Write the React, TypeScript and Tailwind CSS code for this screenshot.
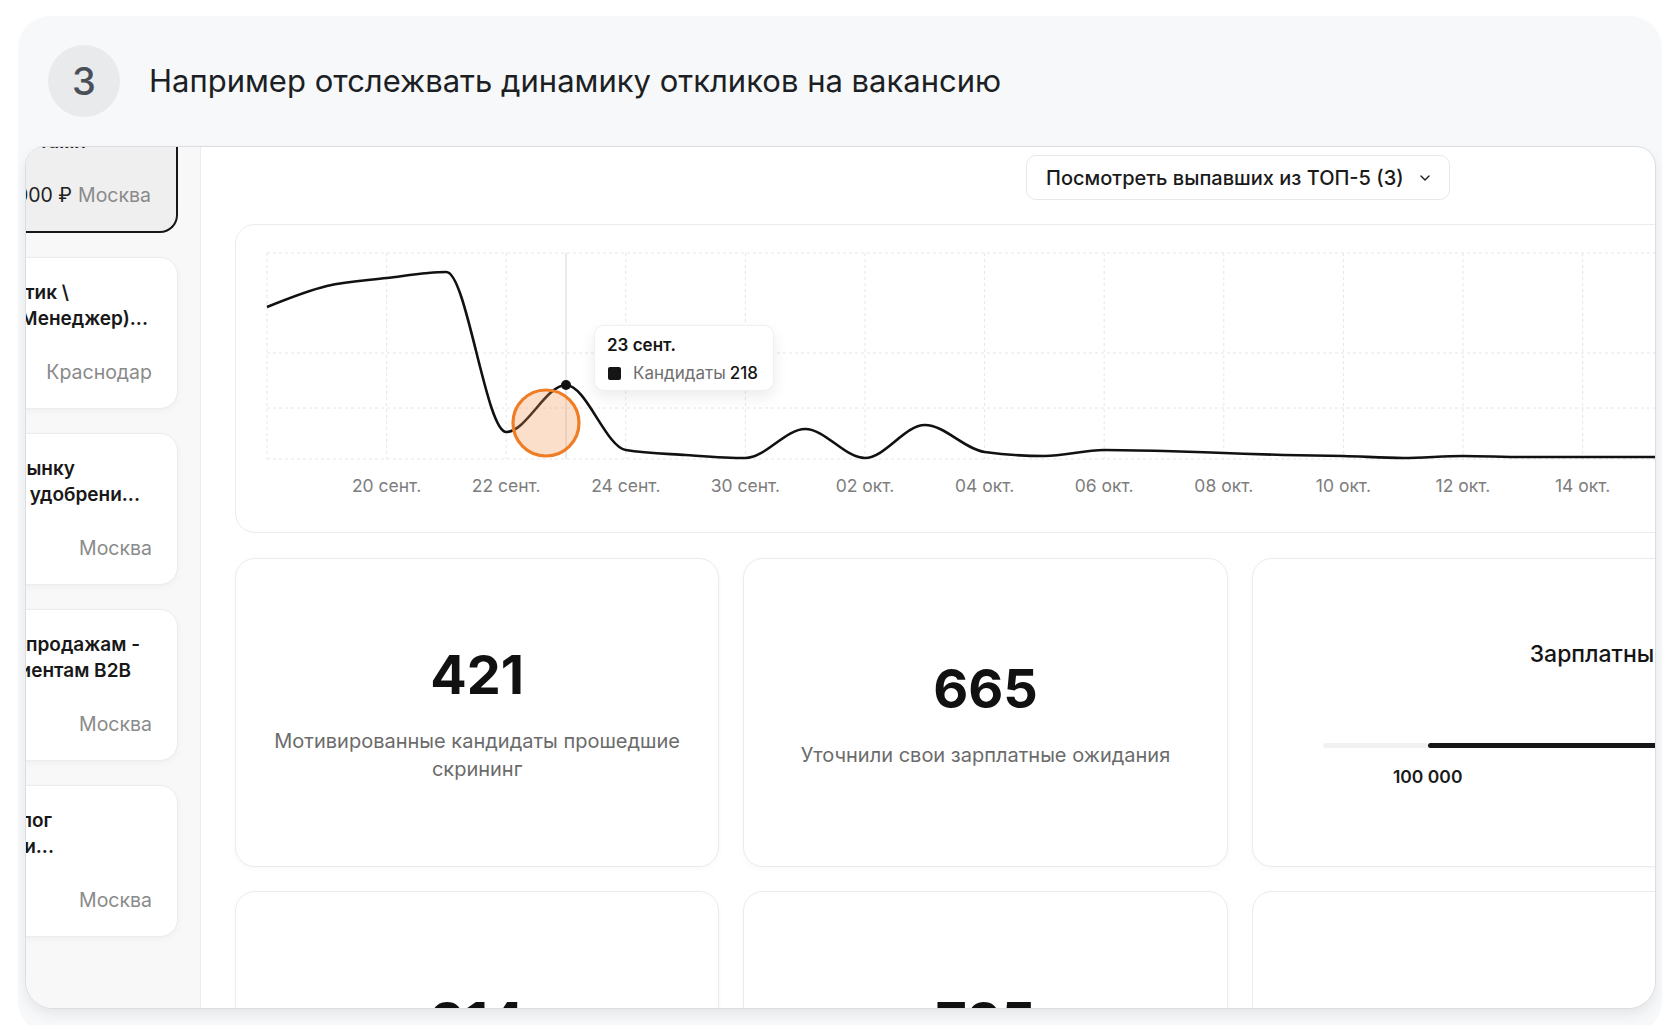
import { ChevronDown } from "lucide-react";

// chart geometry, in px inside the chart card
const STEP = 59.8;
const X0 = 31;
const VALUES = [
  82, 61, 53, 47, 207, 160, 225, 230, 233, 204, 233, 200, 227, 231, 225, 226,
  228, 230, 231, 233, 231, 232, 232, 232, 232, 232,
];
const LABELS: Record<number, string> = {
  2: "20 сент.",
  4: "22 сент.",
  6: "24 сент.",
  8: "30 сент.",
  10: "02 окт.",
  12: "04 окт.",
  14: "06 окт.",
  16: "08 окт.",
  18: "10 окт.",
  20: "12 окт.",
  22: "14 окт.",
  24: "16 окт.",
};
const GRID_Y = [28, 128, 183, 234];

// d3 curveMonotoneX, rewritten by hand
function monotonePath(pts: [number, number][]) {
  const n = pts.length;
  const sign = (v: number) => (v < 0 ? -1 : 1);
  const t: number[] = new Array(n).fill(0);
  for (let i = 1; i < n - 1; i++) {
    const [x0, y0] = pts[i - 1];
    const [x1, y1] = pts[i];
    const [x2, y2] = pts[i + 1];
    const h0 = x1 - x0;
    const h1 = x2 - x1;
    const s0 = (y1 - y0) / h0;
    const s1 = (y2 - y1) / h1;
    const p = (s0 * h1 + s1 * h0) / (h0 + h1);
    t[i] =
      (sign(s0) + sign(s1)) *
        Math.min(Math.abs(s0), Math.abs(s1), 0.5 * Math.abs(p)) || 0;
  }
  const h = pts[1][0] - pts[0][0];
  t[0] = ((3 * (pts[1][1] - pts[0][1])) / h - t[1]) / 2;
  const hl = pts[n - 1][0] - pts[n - 2][0];
  t[n - 1] = ((3 * (pts[n - 1][1] - pts[n - 2][1])) / hl - t[n - 2]) / 2;
  let d = `M${pts[0][0]},${pts[0][1]}`;
  for (let i = 0; i < n - 1; i++) {
    const [xa, ya] = pts[i];
    const [xb, yb] = pts[i + 1];
    const dx = (xb - xa) / 3;
    d += `C${xa + dx},${ya + dx * t[i]},${xb - dx},${yb - dx * t[i + 1]},${xb},${yb}`;
  }
  return d;
}

const vacancies = [
  {
    lines: [
      { text: "Менеджер по работе с", pr: "pr-[70px]" },
      { text: "ключевыми клиентами", pr: "pr-[90px]" },
    ],
    salary: "от 150 000 ₽",
    city: "Москва",
    active: true,
  },
  {
    lines: [
      { text: "Логистик \\", pr: "pr-[108px]" },
      { text: "Специалист (Менеджер)...", pr: "pr-[29px]" },
    ],
    city: "Краснодар",
  },
  {
    lines: [
      { text: "Эксперт по рынку", pr: "pr-[102px]" },
      { text: "минеральных удобрени...", pr: "pr-[37px]" },
    ],
    city: "Москва",
  },
  {
    lines: [
      { text: "Менеджер по продажам -", pr: "pr-[37px]" },
      { text: "клиентам B2B", pr: "pr-[46px]" },
    ],
    city: "Москва",
  },
  {
    lines: [
      { text: "Технолог", pr: "pr-[125px]" },
      { text: "по химии...", pr: "pr-[123px]" },
    ],
    city: "Москва",
  },
];

function VacancyCard({ v }: { v: (typeof vacancies)[number] }) {
  return (
    <div
      className={`h-[152px] w-[330px] shrink-0 rounded-[18px] pt-[22px] ${
        v.active
          ? "border-r-2 border-b-2 border-[#161616] bg-[#efefef]"
          : "border border-[#ececec] bg-white shadow-[0_2px_6px_rgba(0,0,0,0.04)]"
      }`}
    >
      {v.lines.map((l) => (
        <div
          key={l.text}
          className={`flex justify-end whitespace-nowrap text-[19px] leading-[26px] font-semibold text-[#181818] ${l.pr}`}
        >
          {l.text}
        </div>
      ))}
      <div className="mt-[27px] flex justify-end gap-[6px] whitespace-nowrap pr-[25px] text-[19.5px] leading-[26px]">
        {v.salary && <span className="text-[#202020]">{v.salary}</span>}
        <span className="text-[#8a8a8a]">{v.city}</span>
      </div>
    </div>
  );
}

function Chart() {
  const pts = VALUES.map((y, i) => [X0 + i * STEP, y] as [number, number]);
  const cols = Array.from({ length: 13 }, (_, k) => X0 + k * 2 * STEP);
  return (
    <div className="relative mt-[24px] h-[309px] w-[1501px] rounded-[20px] border border-[#ebebeb] bg-white">
      <svg width="1499" height="307" className="block">
        {GRID_Y.map((y) => (
          <line
            key={y}
            x1={X0}
            x2={1499}
            y1={y}
            y2={y}
            stroke="#e6e6e6"
            strokeDasharray="3 3"
          />
        ))}
        {cols.map((x) => (
          <line
            key={x}
            x1={x}
            x2={x}
            y1={28}
            y2={234}
            stroke="#e6e6e6"
            strokeDasharray="3 3"
          />
        ))}
        <line x1={X0 + 5 * STEP} x2={X0 + 5 * STEP} y1={28} y2={234} stroke="#d4d4d4" />
        <path d={monotonePath(pts)} fill="none" stroke="#111" strokeWidth="2.6" />
        <circle cx={310} cy={198} r={33} fill="rgba(243,150,80,0.3)" stroke="#ef7d25" strokeWidth="3.2" />
        <circle cx={X0 + 5 * STEP} cy={160} r={5} fill="#111" />
        {Object.entries(LABELS).map(([i, label]) => (
          <text
            key={i}
            x={X0 + Number(i) * STEP}
            y={267}
            textAnchor="middle"
            fontSize="17.5"
            fill="#7d7d7d"
            fontFamily="Inter, sans-serif"
          >
            {label}
          </text>
        ))}
      </svg>
      <div className="absolute left-[358px] top-[100px] h-[66px] w-[180px] rounded-[10px] border border-[#f0f0f0] bg-white px-[12px] pt-[7px] shadow-[0_6px_16px_rgba(0,0,0,0.08)]">
        <div className="text-[17px] leading-[24px] font-semibold text-[#151515]">23 сент.</div>
        <div className="mt-[4px] flex items-center text-[17px] leading-[24px]">
          <span className="mr-[12px] ml-[1px] h-[13px] w-[13px] rounded-[2px] bg-[#151515]" />
          <span className="text-[#6e6e6e]">Кандидаты</span>
          <span className="ml-[4px] font-medium text-[#151515]">218</span>
        </div>
      </div>
    </div>
  );
}

function StatCard({ value, label }: { value: string; label: string }) {
  return (
    <div className="flex h-[309px] flex-col items-center justify-center rounded-[20px] border border-[#ebebeb] bg-white px-[20px] text-center shadow-[0_2px_6px_rgba(0,0,0,0.03)]">
      <div className="text-[54px] leading-[66px] font-bold text-[#111]">{value}</div>
      <div className="mt-[19px] max-w-[430px] text-[20px] leading-[28px] text-[#6b6b6b]">{label}</div>
    </div>
  );
}

function SalaryCard() {
  return (
    <div className="h-[309px] overflow-hidden rounded-[20px] border border-[#ebebeb] bg-white shadow-[0_2px_6px_rgba(0,0,0,0.03)]">
      <div className="whitespace-nowrap pt-[81px] pl-[277px] text-[23px] leading-[28px] font-medium text-[#151515]">
        Зарплатные ожидания
      </div>
      <div className="mt-[75px] ml-[70px] flex h-[5px] w-[380px]">
        <div className="w-[105px] rounded-l-full bg-[#f1f1f1]" />
        <div className="flex-1 rounded-full bg-[#161616]" />
      </div>
      <div className="mt-[18px] ml-[125px] w-[100px] text-center text-[17.5px] leading-[22px] font-semibold text-[#1a1a1a]">
        100 000
      </div>
    </div>
  );
}

export default function App() {
  return (
    <div className="h-[1025px] overflow-hidden bg-white px-[18px] pt-[16px] font-['Inter',sans-serif]">
      <div className="rounded-[32px] bg-[#f7f8fa] pr-[6px] pb-[24px] pl-[7px]">
        <div className="flex h-[130px] items-center pl-[23px]">
          <div className="flex h-[72px] w-[72px] items-center justify-center rounded-full bg-[#e9eaec] text-[38px] font-medium text-[#4a4f57]">
            3
          </div>
          <div className="ml-[29px] text-[31px] text-[#1c1f24]">
            Например отслежвать динамику откликов на вакансию
          </div>
        </div>

        <div className="flex h-[863px] overflow-hidden rounded-t-[20px] rounded-b-[28px] border border-[#dcdde0] bg-white shadow-[0_6px_12px_rgba(0,0,0,0.07)]">
          <aside className="w-[175px] shrink-0 overflow-hidden border-r border-[#ececec] bg-[#f8f8f8]">
            <div className="-mt-[66px] flex flex-col items-end gap-[24px] pr-[22px]">
              {vacancies.map((v, i) => (
                <VacancyCard key={i} v={v} />
              ))}
            </div>
          </aside>

          <main className="flex-1 overflow-hidden pt-[8px] pl-[34px]">
            <button className="ml-[791px] flex h-[45px] w-[424px] items-center rounded-[10px] border border-[#e8e8e8] bg-white pl-[19px] text-[20px] font-medium text-[#1a1a1a]">
              Посмотреть выпавших из ТОП-5 (3)
              <ChevronDown className="ml-[13px] h-[16px] w-[16px]" strokeWidth={2} />
            </button>
            <Chart />
            <div className="mt-[25px] grid w-[1501px] grid-cols-3 gap-[24px]">
              <StatCard value="421" label="Мотивированные кандидаты прошедшие скрининг" />
              <StatCard value="665" label="Уточнили свои зарплатные ожидания" />
              <SalaryCard />
              <StatCard value="314" label="Прошли тестовое задание" />
              <StatCard value="725" label="Открыли приглашение на интервью" />
              <div className="h-[309px] rounded-[20px] border border-[#ebebeb] bg-white" />
            </div>
          </main>
        </div>
      </div>
    </div>
  );
}
